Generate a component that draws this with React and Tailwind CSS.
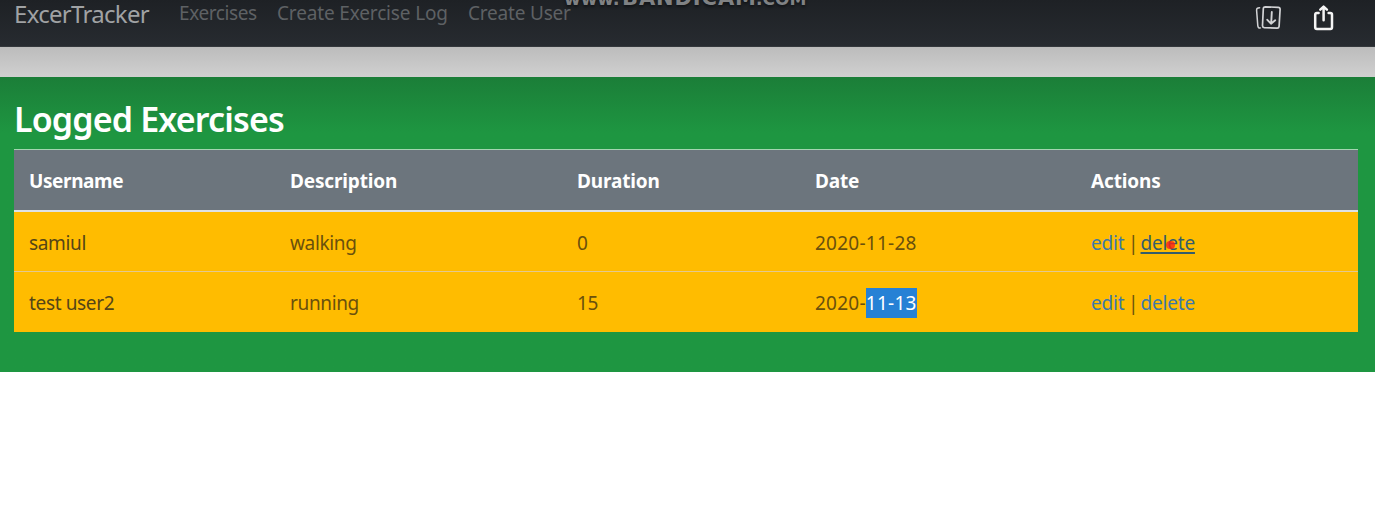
const rows = [
  { user: "samiul", description: "walking", duration: "0", date: "2020-11-28", selected: "", hovered: true },
  { user: "test user2", description: "running", duration: "15", date: "2020-", selected: "11-13", hovered: false },
];

function StackDownIcon() {
  return (
    <svg className="h-7 w-7" viewBox="0 0 28 28" fill="none" stroke="#d2d3d5" strokeWidth="1.7" strokeLinecap="round" strokeLinejoin="round">
      <path d="M10.2 3.8 23.2 4.4Q25.2 4.6 25.1 6.5L24.1 23.3Q23.9 25.2 22 25.1L9.3 24.6Q7.4 24.4 7.5 22.5L8.3 5.8Q8.4 3.8 10.2 3.8" />
      <path d="M4.6 4.7Q1.4 4.8 1.6 7.4L2.8 22.6Q3.1 25.6 5.4 24.9" strokeWidth="1.5" />
      <path d="M16.8 9 16.2 20.2M12.3 16.8 16 20.7 20.2 17.3" strokeWidth="1.9" />
    </svg>
  );
}

function ShareIcon() {
  return (
    <svg className="h-7 w-6" viewBox="0 0 24 28" fill="none" stroke="#f4f4f4" strokeWidth="2.5" strokeLinecap="round" strokeLinejoin="round">
      <path d="M6.6 10.1H4.8Q3.2 10.1 3.2 11.7V24.2Q3.2 25.9 4.9 25.9H18.4Q20 25.9 20 24.2V11.7Q20 10.1 18.4 10.1H16.6" />
      <path d="M11.6 17.2V4.4M8.3 6.6 11.6 3.6 14.9 6.6" />
    </svg>
  );
}

export default function App() {
  return (
    <div className="relative h-[527px] w-[1375px] overflow-hidden bg-white font-['Noto_Sans','Open_Sans',sans-serif]">
      <div className="flex h-[47px] items-start justify-between border-b border-[#34383c] bg-linear-to-b from-[#1e2125] to-[#272b30] pr-[39px] pl-[14px]">
        <nav className="flex text-[19px] leading-[27px] whitespace-nowrap text-[#5e6164]">
          <a className="w-[165px] text-[24px] leading-7 tracking-[-0.7px] text-[#a0a2a4]">ExcerTracker</a>
          <a className="w-[98px] tracking-[-0.4px]">Exercises</a>
          <a className="w-[191px] tracking-[-0.15px]">Create Exercise Log</a>
          <a className="tracking-[-0.2px]">Create User</a>
        </nav>
        <div className="flex gap-[29px] pt-[3px]">
          <StackDownIcon />
          <ShareIcon />
        </div>
      </div>
      <div className="h-[30px] bg-linear-to-b from-[#bcbcbc] to-[#d0d0d0]" />
      <main className="h-[295px] bg-[#1e9641] bg-linear-to-b from-[#1b7e38] to-[#1e9641] to-[56px] pr-[17px] pl-[14px]">
        <h3 className="h-[72px] pt-[22px] text-[34px] leading-10 font-semibold tracking-[-0.85px] whitespace-nowrap text-white">Logged Exercises</h3>
        <table className="w-full table-fixed border-collapse text-left text-[19px] leading-[30px] whitespace-nowrap text-[#6a500d]">
          <colgroup>
            <col className="w-[261px]" />
            <col className="w-[287px]" />
            <col className="w-[238px]" />
            <col className="w-[276px]" />
            <col />
          </colgroup>
          <thead className="bg-[#6c757d] tracking-[-0.15px] text-white">
            <tr className="h-[61px] border-t border-b-2 border-t-[#a4d5b1] border-b-[#dee2e6]">
              {["Username", "Description", "Duration", "Date", "Actions"].map((label) => (
                <th key={label} className="pt-[3px] pl-[15px] font-bold first:tracking-[-0.4px]">{label}</th>
              ))}
            </tr>
          </thead>
          <tbody className="bg-[#ffbc00] tracking-[-0.35px]">
            {rows.map((row) => (
              <tr key={row.user} className="h-[61px] border-t border-t-[#e3c88f] last:h-[60px]">
                <td className="pt-[3px] pl-[15px] text-[#554517]">{row.user}</td>
                <td className="pt-[3px] pl-[15px]">{row.description}</td>
                <td className="pt-[3px] pl-[15px]">{row.duration}</td>
                <td className="pt-[3px] pl-[15px] tracking-[0.25px]">
                  {row.date}
                  {row.selected && <span className="inline-block bg-[#2681d5] text-white">{row.selected}</span>}
                </td>
                <td className="pt-[3px] pl-[15px] tracking-[-0.2px]">
                  <a className="text-[#3d79a8]">edit</a>
                  <span className="tracking-[-1.4px]"> | </span>
                  {row.hovered ? (
                    <a className="relative text-[#345d6b] underline decoration-2 underline-offset-2">
                      delete
                      <span className="absolute top-[11px] left-[25px] h-[8px] w-[9px] rounded-full bg-[#fb2016]/80" />
                    </a>
                  ) : (
                    <a className="text-[#3d79a8]">delete</a>
                  )}
                </td>
              </tr>
            ))}
          </tbody>
        </table>
      </main>
      <div className="absolute top-[-14px] left-[564px] flex items-baseline font-['DejaVu_Sans',sans-serif] text-[20px] leading-6 font-bold whitespace-nowrap text-[#808284] [text-shadow:0_2px_3px_#101215]">
        <span className="w-[58px] text-[18px]">www.</span>
        <span className="w-[134px] tracking-[0.9px] text-[21px]">BANDICAM</span>
        <span className="text-[17px]">.COM</span>
      </div>
    </div>
  );
}
